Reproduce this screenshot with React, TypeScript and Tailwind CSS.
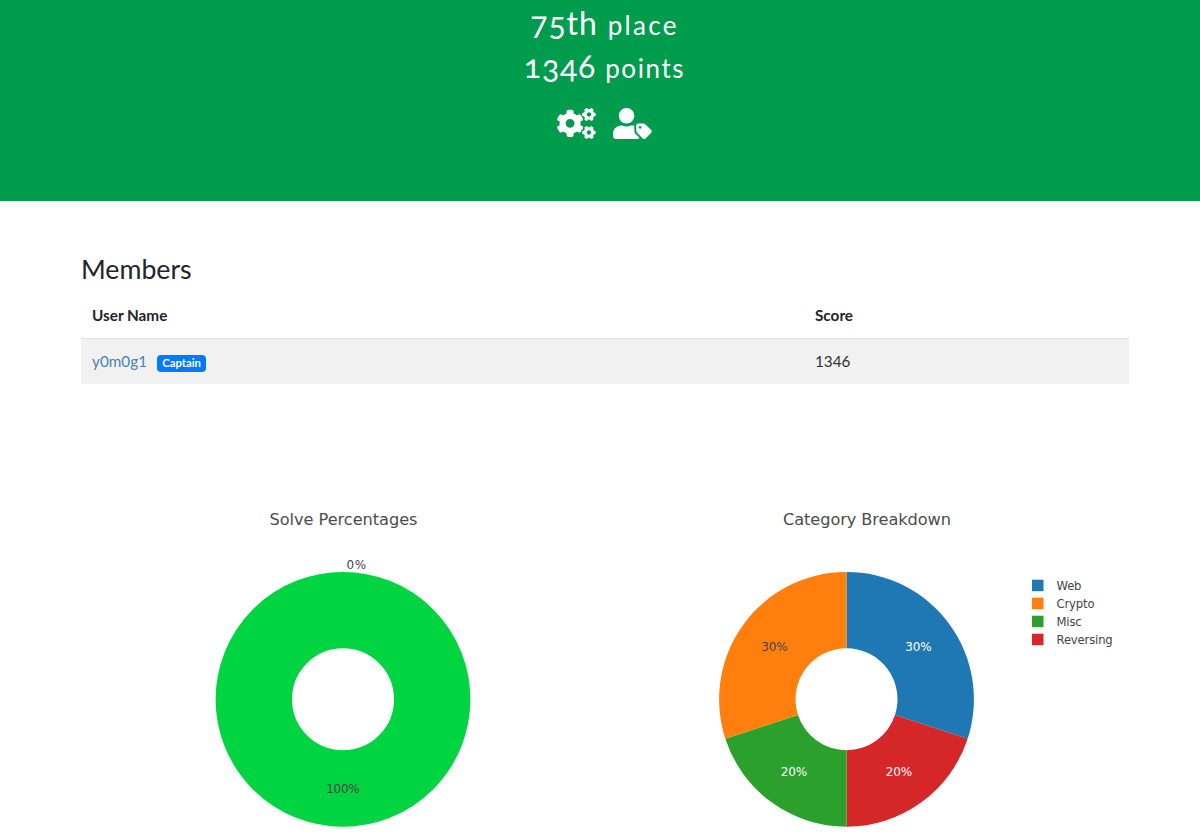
import { FaCogs, FaUserTag } from "react-icons/fa";

type Slice = { name: string; value: number; color: string; labelColor: string; x: number; y: number };

const slices: Slice[] = [
  { name: "Web", value: 30, color: "#1f77b4", labelColor: "#ffffff", x: 313.5, y: 167 },
  { name: "Reversing", value: 20, color: "#d62728", labelColor: "#ffffff", x: 294, y: 292 },
  { name: "Misc", value: 20, color: "#2ca02c", labelColor: "#ffffff", x: 189, y: 292 },
  { name: "Crypto", value: 30, color: "#ff7f0e", labelColor: "#444444", x: 169.5, y: 167 },
];
const legend = ["Web", "Crypto", "Misc", "Reversing"];

function ringPath(cx: number, cy: number, start: number, end: number) {
  const outer = 127.4;
  const inner = 51;
  const point = (r: number, t: number) => {
    const a = t * 2 * Math.PI;
    return `${(cx + r * Math.sin(a)).toFixed(2)} ${(cy - r * Math.cos(a)).toFixed(2)}`;
  };
  return `M${point(outer, start)}A${outer} ${outer} 0 0 1 ${point(outer, end)}L${point(inner, end)}A${inner} ${inner} 0 0 0 ${point(inner, start)}Z`;
}

function SolveChart() {
  return (
    <svg width="524" height="355" className="block font-['DejaVu_Sans',sans-serif]">
      <text x="262.5" y="41" textAnchor="middle" fontSize="16.2" fill="#4c4c4c" textLength="148">Solve Percentages</text>
      <circle cx="262" cy="215.3" r="89.2" fill="none" stroke="#00d440" strokeWidth="76.4" />
      <text x="275.3" y="85" textAnchor="middle" fontSize="12" fill="#444" textLength="19.5">0%</text>
      <text x="262" y="309" textAnchor="middle" fontSize="12" fill="#444" textLength="33.5">100%</text>
    </svg>
  );
}

function CategoryChart() {
  let start = 0;
  return (
    <svg width="524" height="355" className="block font-['DejaVu_Sans',sans-serif]">
      <text x="262" y="41" textAnchor="middle" fontSize="16.2" fill="#4c4c4c" textLength="168">Category Breakdown</text>
      {slices.map((s) => {
        const from = start;
        start += s.value / 100;
        return <path key={s.name} d={ringPath(241.5, 215.3, from, start)} fill={s.color} />;
      })}
      {slices.map((s) => (
        <text key={s.name} x={s.x} y={s.y} textAnchor="middle" fontSize="12" fill={s.labelColor} textLength="26.5">{s.value}%</text>
      ))}
      {legend.map((name, i) => (
        <g key={name}>
          <rect x="427" y={95.7 + i * 18} width="11.5" height="11.5" fill={slices.find((s) => s.name === name)?.color} />
          <text x="451.5" y={106 + i * 18} fontSize="11.6" letterSpacing="-0.15" fill="#444">{name}</text>
        </g>
      ))}
    </svg>
  );
}

export default function App() {
  return (
    <div className="h-[839px] overflow-hidden bg-white font-['Lato',sans-serif] text-[#212529]">
      <header className="flex h-[201px] flex-col items-center bg-[#009c4e] pl-[9px] text-white">
        <h2 className="mt-[1px] flex h-[43px] items-baseline text-[32px] leading-[43px] font-normal tracking-[0.9px] oldstyle-nums">
          75th<span className="ml-[10px] text-[26px] tracking-[2.3px]">place</span>
        </h2>
        <h2 className="flex h-[43px] items-baseline text-[32px] leading-[43px] font-normal tracking-[0.8px] oldstyle-nums">
          1346<span className="ml-[9px] text-[26px] tracking-[1.6px]">points</span>
        </h2>
        <div className="mt-[21px] flex gap-[17px]">
          <FaCogs className="h-[31px] w-[38.75px]" />
          <FaUserTag className="h-[31px] w-[38.75px]" />
        </div>
      </header>
      <main className="ml-[81px] w-[1048px]">
        <h3 className="pt-[51px] text-[26.7px] leading-[34px]">Members</h3>
        <table className="mt-[6px] w-full table-fixed text-left text-[15.3px]">
          <colgroup>
            <col className="w-[723px]" />
            <col />
          </colgroup>
          <thead>
            <tr className="h-[46px] border-b border-[#dee2e6]">
              <th className="px-[11px] pt-[2px] font-bold">User Name</th>
              <th className="px-[11px] pt-[2px] font-bold">Score</th>
            </tr>
          </thead>
          <tbody>
            <tr className="h-[46px] bg-[#f1f1f1]">
              <td className="px-[11px] pt-px">
                <div className="flex items-center">
                  <a className="text-[#4a82b8]">y0m0g1</a>
                  <span className="mt-[3px] ml-[10px] flex h-[17px] w-[49px] items-center justify-center rounded-[4px] bg-[#007bff] text-[11.3px] font-bold text-white">Captain</span>
                </div>
              </td>
              <td className="px-[11px] pt-px text-[#333]">1346</td>
            </tr>
          </tbody>
        </table>
        <section className="mt-[100px] flex">
          <SolveChart />
          <CategoryChart />
        </section>
      </main>
    </div>
  );
}
